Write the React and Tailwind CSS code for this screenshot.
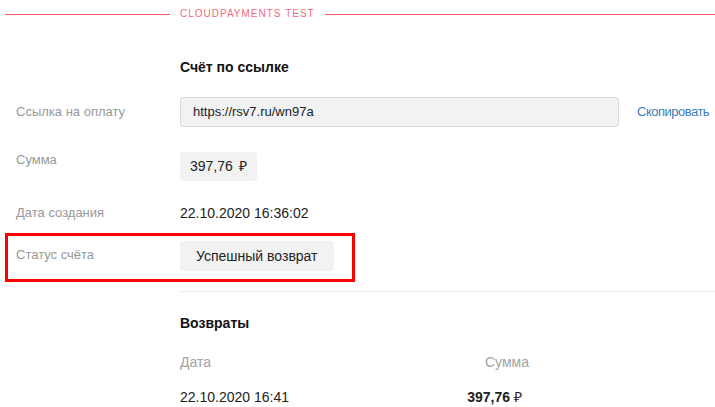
export default function App() {
  return (
    <div className="w-[715px] h-[407px] overflow-hidden bg-white font-['Liberation_Sans',Arial,sans-serif] text-[#222]">
      {/* === шапка === */}
      <div className="flex items-center h-[28px]">
        <div className="ml-[5px] w-[165px] h-px bg-[#ef5a6b]" />
        <div className="ml-[10px] text-[10px] leading-[12px] tracking-[1px] text-[#f06b7b]">
          CLOUDPAYMENTS TEST
        </div>
        <div className="ml-[10px] flex-1 h-px bg-[#ef5a6b]" />
      </div>

      {/* === Счёт по ссылке === */}
      <div className="mt-[29px] pl-[180px] text-[14px] leading-[20px] font-bold text-[#111]">
        Счёт по ссылке
      </div>

      <div className="mt-[20px] flex items-center">
        <div className="w-[180px] pl-4 text-[13px] text-[#999]">Ссылка на оплату</div>
        <div className="w-[439px] h-[30px] flex items-center px-3 border border-[#d9d9d9] rounded-[3px] bg-[#f2f2f2] text-[13px]">
          https://rsv7.ru/wn97a
        </div>
        <div className="ml-[18px] text-[13px] tracking-[-0.5px] text-[#3f7dbd]">Скопировать</div>
      </div>

      <div className="mt-[25px] flex items-start">
        <div className="w-[180px] pl-4 text-[13px] leading-[15px] text-[#999]">Сумма</div>
        <div className="h-[29px] px-[10px] flex items-center rounded-[4px] bg-[#f2f2f2] text-[14px]">
          397,76<span className="ml-[6px]">₽</span>
        </div>
      </div>

      <div className="mt-[24px] flex items-center leading-[16px]">
        <div className="w-[180px] pl-4 text-[13px] text-[#999]">Дата создания</div>
        <div className="text-[14px]">22.10.2020 16:36:02</div>
      </div>

      <div className="relative mt-[20px] flex items-start">
        <div className="w-[180px] pl-4 mt-[6px] text-[13px] leading-[15px] text-[#999]">Статус счёта</div>
        <div className="h-[30px] px-4 flex items-center rounded-[4px] bg-[#f2f2f2] text-[14px]">
          Успешный возврат
        </div>
        <div className="absolute left-[5px] top-[-8px] w-[350px] h-[49px] border-[3px] border-[#ff0000]" />
      </div>

      <div className="mt-[20px] ml-[180px] h-px bg-[#ebebeb]" />

      {/* === Возвраты === */}
      <div className="mt-[21px] pl-[180px] text-[14px] leading-[20px] font-bold text-[#111]">
        Возвраты
      </div>

      <div className="mt-[21px] ml-[180px] w-[349px] flex justify-between text-[14px] leading-[16px] text-[#a3a3a3]">
        <span>Дата</span>
        <span>Сумма</span>
      </div>

      <div className="mt-[19px] ml-[180px] w-[349px] flex justify-between text-[14px] leading-[16px]">
        <span>22.10.2020 16:41</span>
        <span className="pr-[7px] font-bold">
          397,76<span className="ml-[4px] font-normal">₽</span>
        </span>
      </div>
    </div>
  );
}
